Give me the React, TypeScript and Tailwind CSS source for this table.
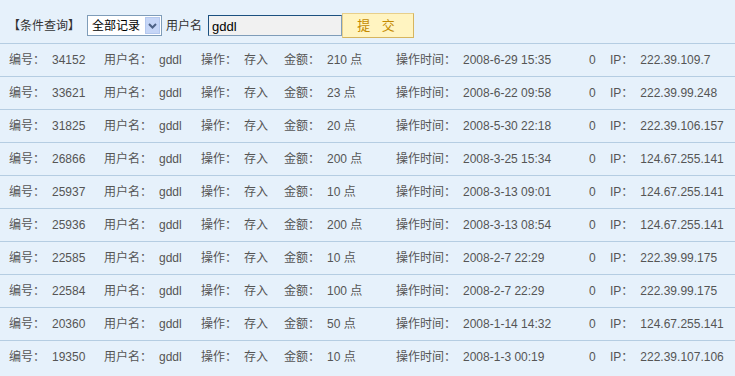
import React from "react";

const rows = [
  ["34152", "210", "2008-6-29 15:35", "222.39.109.7"],
  ["33621", "23", "2008-6-22 09:58", "222.39.99.248"],
  ["31825", "20", "2008-5-30 22:18", "222.39.106.157"],
  ["26866", "200", "2008-3-25 15:34", "124.67.255.141"],
  ["25937", "10", "2008-3-13 09:01", "124.67.255.141"],
  ["25936", "200", "2008-3-13 08:54", "124.67.255.141"],
  ["22585", "10", "2008-2-7 22:29", "222.39.99.175"],
  ["22584", "100", "2008-2-7 22:29", "222.39.99.175"],
  ["20360", "50", "2008-1-14 14:32", "124.67.255.141"],
  ["19350", "10", "2008-1-3 00:19", "222.39.107.106"],
];

function Cell({ w, label, value }: { w: string; label: string; value?: string }) {
  return (
    <div className={`${w} flex shrink-0 items-center`}>
      <span>{label}</span>
      {value !== undefined && <span className="ml-[7px]">{value}</span>}
    </div>
  );
}

export default function App() {
  return (
    <div
      className="w-[735px] h-[376px] overflow-hidden bg-[#e6f1fb] text-[12px] text-[#555] leading-none"
      style={{ fontFamily: '"Liberation Sans", "Noto Sans CJK SC", sans-serif' }}
    >
      <div className="h-[43px] flex items-center pl-[8px] pt-[8px] text-[#333]">
        <span className="w-[79px]">【条件查询】</span>
        <div className="h-[21px] w-[75px] border border-[#7f9db9] bg-white flex items-center justify-between pl-[4px] pr-[1px] text-[12px] text-black">
          <span>全部记录</span>
          <div className="w-[15px] h-[17px] bg-[#c6d6f7] border border-[#b4c8ee] flex items-center justify-center">
            <svg width="9" height="6" viewBox="0 0 9 6">
              <path d="M1 1 L4.5 4.5 L8 1" stroke="#4d6185" strokeWidth="2" fill="none" />
            </svg>
          </div>
        </div>
        <span className="ml-[4px] text-[12px] w-[42px]">用户名</span>
        <div className="h-[21px] w-[134px] border border-[#1c5180] border-b-[#7f9db9] border-r-[#7f9db9] bg-[#f1f1f1] flex items-center pl-[3px] pt-[2px] text-[13px] text-black">
          gddl
        </div>
        <div className="h-[25px] w-[72px] bg-[#fff4c1] border border-[#e7cf8b] border-b-[#d6b55f] border-r-[#d6b55f] flex items-center justify-center text-[13px] text-[#c48a00] tracking-[4px]">
          提 交
        </div>
      </div>
      {rows.map((r, i) => (
        <div key={i} className="h-[33px] border-t border-[#b5cde2] flex items-center pl-[9px]">
          <Cell w="w-[95px]" label="编号：" value={r[0]} />
          <Cell w="w-[97px]" label="用户名：" value="gddl" />
          <Cell w="w-[83px]" label="操作：" value="存入" />
          <Cell w="w-[112px]" label="金额：" value={`${r[1]} 点`} />
          <Cell w="w-[193px]" label="操作时间：" value={r[2]} />
          <Cell w="w-[21px]" label="0" />
          <Cell w="w-[120px]" label="IP：" value={r[3]} />
        </div>
      ))}
    </div>
  );
}
